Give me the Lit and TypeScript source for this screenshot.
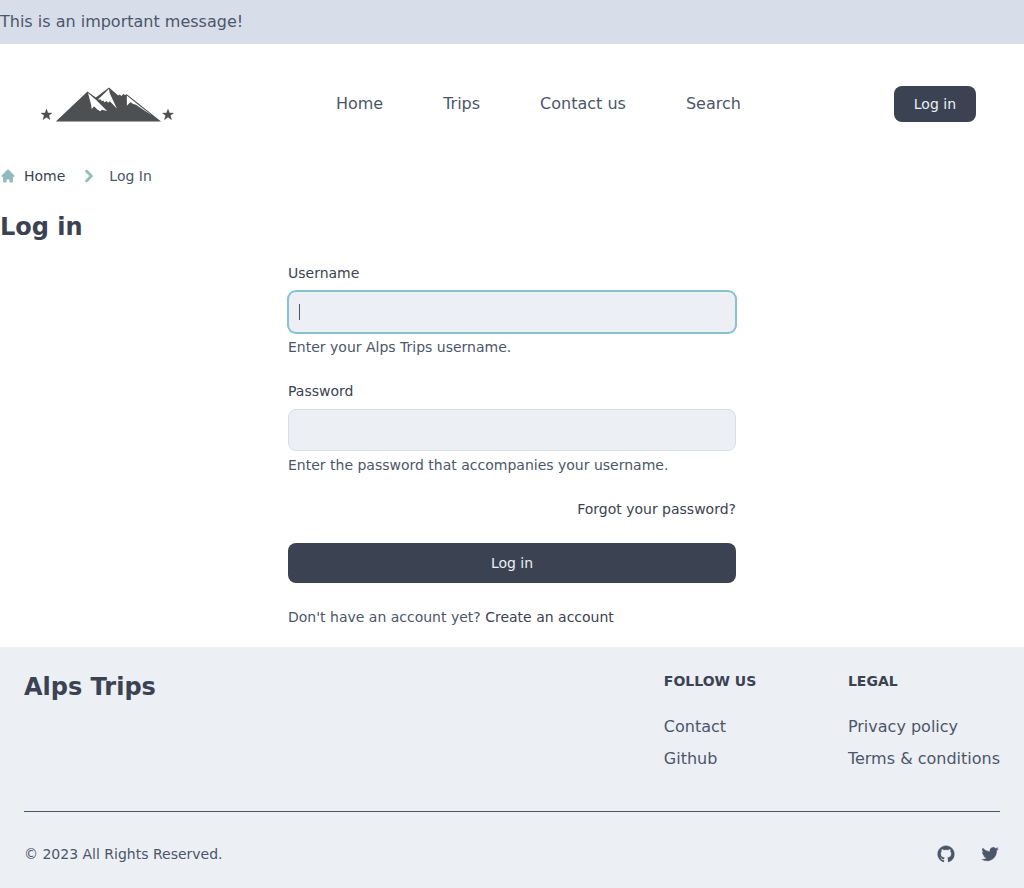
import { LitElement, html, css } from "lit";
import { customElement } from "lit/decorators.js";

@customElement("app-root")
export class AppRoot extends LitElement {
  static styles = css`
    :host { display: block; min-height: 888px; background: #fff; color: #4c566a; font: 16px/24px "DejaVu Sans", sans-serif; }
    * { box-sizing: border-box; margin: 0; padding: 0; }
    a { color: inherit; text-decoration: none; }
    ul { list-style: none; }
    svg { display: block; }
    .banner { background: #d8dee9; padding: 10px 0; }
    .header { height: 120px; padding: 0 48px 0 40px; display: grid; grid-template-columns: 295.88px 1fr auto; align-items: center; }
    .menu { display: flex; gap: 60px; }
    .button { display: block; border: 0; border-radius: 8px; background: #3b4252; color: #eceff4; font: 14px/20px "DejaVu Sans", sans-serif; }
    .nav-button { padding: 8px 20px; }
    .crumbs { display: flex; align-items: center; height: 20px; margin-top: 2px; font-size: 14px; line-height: 20px; color: #4c566a; }
    .crumbs svg { color: #8fbcbb; stroke: currentColor; stroke-width: 0.4; }
    .home { display: flex; align-items: center; gap: 8px; color: #3b4252; margin-right: 12px; }
    .current { margin-left: 8px; }
    h1, .brand { font-size: 24px; line-height: 32px; font-weight: 700; color: #3b4252; }
    h1 { margin: 25px 0 20px; }
    form { width: 448px; margin: 0 auto; font-size: 14px; line-height: 20px; display: flex; flex-direction: column; gap: 24px; }
    label { display: block; color: #3b4252; margin-bottom: 8px; }
    .input { height: 42px; display: flex; align-items: center; padding: 0 10px; border: 1px solid #d8dee9; border-radius: 8px; background: #eceff4; margin-bottom: 4px; }
    .focused { border-color: #88c0d0; box-shadow: 0 0 0 1px #88c0d0; }
    .caret { width: 1px; height: 16px; background: #4c566a; }
    .strong { color: #3b4252; }
    .forgot { align-self: flex-end; }
    .submit { width: 100%; padding: 10px 20px; }
    footer { margin-top: 20px; height: 241px; background: #eceff4; padding: 24px; }
    .top { display: flex; justify-content: space-between; }
    .cols { display: grid; grid-template-columns: 1fr 1fr; gap: 32px; white-space: nowrap; }
    h2 { font-size: 14px; line-height: 20px; color: #3b4252; margin-bottom: 24px; text-transform: uppercase; }
    li + li { margin-top: 8px; }
    .rule { height: 1px; background: #4c566a; margin: 40px 0 32px; }
    .bottom { display: flex; justify-content: space-between; align-items: center; font-size: 14px; line-height: 20px; }
    .social { display: flex; gap: 24px; }
  `;

  private field(label: string, help: string, focused: boolean) {
    return html`<div>
      <label>${label}</label>
      <div class="input ${focused ? "focused" : ""}">${focused ? html`<span class="caret"></span>` : ""}</div>
      <p>${help}</p>
    </div>`;
  }

  render() {
    return html`
      <div class="banner">This is an important message!</div>
      <header class="header">
        <a href="#" aria-label="Alps Trips">
          <svg width="136" height="40" viewBox="40 84 136 40">
            <g fill="#4d4f51">
              <path stroke="#4d4f51" stroke-width=".3" d="M46.5 109l1.5 3.9 4.1.1-3.2 2.5 1.2 4.2-3.6-2.4-3.6 2.4 1.2-4.2-3.2-2.5 4.1-.1zM168 109l1.5 3.9 4.1.1-3.2 2.5 1.2 4.2-3.6-2.4-3.6 2.4 1.2-4.2-3.2-2.5 4.1-.1z"/>
              <path d="M55.8 121.6L87.5 91.6l8.3 5.8L109 87.5l9.2 7.9 1.5-1 1.8 1.5 1.7-1.8 1.7 1 1.9-.8 34.3 27.3z"/>
            </g>
            <g fill="#fff">
              <path d="M88 93l8.7 7.5 3.2 3.3 7.2 7.2-5.2-1.2-1.6 1.4-3-1.6-3-3.2-1 .6-1.6 2.3-.6-4.5z"/>
              <path d="M109 88.8l.7 4.2 1.9 4.3 5.4 11.4-5.2-5.4-2-2-1.6 1.4-2-1.6-1.7 1.5-1.2-2.2-1.6.8-.8-1.8-3 .2 6.4-6z"/>
              <path d="M126.8 95.6l12.6 10.2 12.4 9.4-7.8-5-8-5.5-2.8-.8-2.5-1.6-1.5 1-2.3 2.5z"/>
            </g>
          </svg>
        </a>
        <nav class="menu"><a href="#">Home</a><a href="#">Trips</a><a href="#">Contact us</a><a href="#">Search</a></nav>
        <a class="button nav-button" href="#">Log in</a>
      </header>
      <nav class="crumbs">
        <a class="home" href="#">
          <svg width="16" height="16" viewBox="0 0 20 20" fill="currentColor"><path d="M10.707 2.293a1 1 0 00-1.414 0l-7 7a1 1 0 001.414 1.414L4 10.414V17a1 1 0 001 1h2a1 1 0 001-1v-2a1 1 0 011-1h2a1 1 0 011 1v2a1 1 0 001 1h2a1 1 0 001-1v-6.586l.293.293a1 1 0 001.414-1.414l-7-7z"/></svg>Home</a>
        <svg width="24" height="24" viewBox="0 0 20 20" fill="currentColor"><path fill-rule="evenodd" d="M7.293 14.707a1 1 0 010-1.414L10.586 10 7.293 6.707a1 1 0 011.414-1.414l4 4a1 1 0 010 1.414l-4 4a1 1 0 01-1.414 0z"/></svg>
        <span class="current">Log In</span>
      </nav>
      <h1>Log in</h1>
      <form>
        ${this.field("Username", "Enter your Alps Trips username.", true)}
        ${this.field("Password", "Enter the password that accompanies your username.", false)}
        <a class="strong forgot" href="#">Forgot your password?</a>
        <button class="button submit" type="button">Log in</button>
        <p>Don't have an account yet? <a class="strong" href="#">Create an account</a></p>
      </form>
      <footer>
        <div class="top">
          <span class="brand">Alps Trips</span>
          <div class="cols">
            <div><h2>Follow us</h2><ul><li><a href="#">Contact</a></li><li><a href="#">Github</a></li></ul></div>
            <div><h2>Legal</h2><ul><li><a href="#">Privacy policy</a></li><li><a href="#">Terms &amp; conditions</a></li></ul></div>
          </div>
        </div>
        <div class="rule"></div>
        <div class="bottom">
          <span>© 2023 All Rights Reserved.</span>
          <div class="social">
            <svg width="20" height="20" viewBox="0 0 24 24" fill="currentColor" stroke="currentColor" stroke-width=".4"><path fill-rule="evenodd" d="M12 2C6.477 2 2 6.484 2 12.017c0 4.425 2.865 8.18 6.839 9.504.5.092.682-.217.682-.483 0-.237-.008-.868-.013-1.703-2.782.605-3.369-1.343-3.369-1.343-.454-1.158-1.11-1.466-1.11-1.466-.908-.62.069-.608.069-.608 1.003.07 1.531 1.032 1.531 1.032.892 1.53 2.341 1.088 2.91.832.092-.647.35-1.088.636-1.338-2.22-.253-4.555-1.113-4.555-4.951 0-1.093.39-1.988 1.029-2.688-.103-.253-.446-1.272.098-2.65 0 0 .84-.27 2.75 1.026A9.564 9.564 0 0112 6.844c.85.004 1.705.115 2.504.337 1.909-1.296 2.747-1.027 2.747-1.027.546 1.379.202 2.398.1 2.651.64.7 1.028 1.595 1.028 2.688 0 3.848-2.339 4.695-4.566 4.943.359.309.678.92.678 1.855 0 1.338-.012 2.419-.012 2.747 0 .268.18.58.688.482A10.019 10.019 0 0022 12.017C22 6.484 17.522 2 12 2z"/></svg>
            <svg width="20" height="20" viewBox="0 0 24 24" fill="currentColor" stroke="currentColor" stroke-width=".4"><path d="M8.29 20.251c7.547 0 11.675-6.253 11.675-11.675 0-.178 0-.355-.012-.53A8.348 8.348 0 0022 5.92a8.19 8.19 0 01-2.357.646 4.118 4.118 0 001.804-2.27 8.224 8.224 0 01-2.605.996 4.107 4.107 0 00-6.993 3.743 11.65 11.65 0 01-8.457-4.287 4.106 4.106 0 001.27 5.477A4.072 4.072 0 012.8 9.713v.052a4.105 4.105 0 003.292 4.022 4.095 4.095 0 01-1.853.07 4.108 4.108 0 003.834 2.85A8.233 8.233 0 012 18.407a11.616 11.616 0 006.29 1.84"/></svg>
          </div>
        </div>
      </footer>`;
  }
}
